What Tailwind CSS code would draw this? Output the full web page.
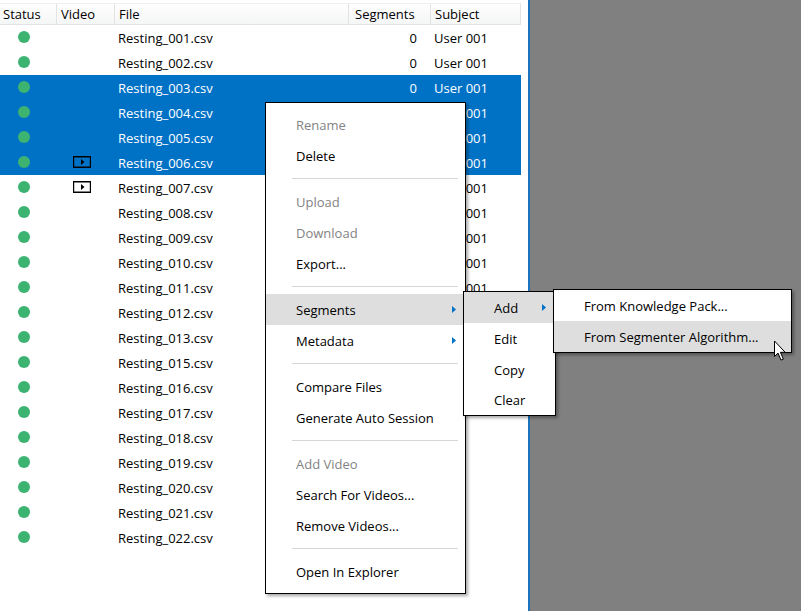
<!DOCTYPE html>
<html lang="en">
<head>
<meta charset="utf-8">
<title>Project files</title>
<script src="https://cdn.jsdelivr.net/npm/@tailwindcss/browser@4"></script>
</head>
<body class="relative flex min-h-screen overflow-hidden bg-[#808080] font-['Open_Sans','Noto_Sans',sans-serif] text-[13px] leading-5 text-black">
<main class="w-[530px] shrink-0 border-r-2 border-[#1a74bd] bg-white pt-[3px]">
  <table class="w-[521px] table-fixed border-separate border-spacing-0">
    <colgroup><col class="w-[57px]"><col class="w-[58px]"><col class="w-[234px]"><col class="w-[82px]"><col></colgroup>
    <thead>
      <tr class="h-[22px] bg-linear-to-b from-white to-[#f4f5f6] text-left">
        <th class="border-y border-r border-[#e2e3e5] border-t-[#f0f0f0] p-0 pl-[3px] font-normal">Status</th>
        <th class="border-y border-r border-[#e2e3e5] border-t-[#f0f0f0] p-0 pl-1 font-normal">Video</th>
        <th class="border-y border-r border-[#e2e3e5] border-t-[#f0f0f0] p-0 pl-1 font-normal">File</th>
        <th class="border-y border-r border-[#e2e3e5] border-t-[#f0f0f0] p-0 pl-[6px] font-normal">Segments</th>
        <th class="border-y border-r border-[#e2e3e5] border-t-[#f0f0f0] p-0 pl-1 font-normal">Subject</th>
      </tr>
    </thead>
    <tbody id="files"></tbody>
  </table>
</main>
<aside class="flex-1"></aside>

<template id="row">
  <tr class="h-[25px]">
    <td class="p-0 pb-0.5"><span class="ml-[18px] block size-3 rounded-full bg-[#3cb371]"></span></td>
    <td class="p-0 pb-0.5"></td>
    <td class="p-0 pl-[3px]"></td>
    <td class="p-0 pr-[14px] text-right"></td>
    <td class="p-0 pl-[3px]"></td>
  </tr>
</template>
<template id="clip">
  <svg class="ml-4 block h-3 w-[18px]" viewBox="0 0 18 12"><path d="M0 0h18v12H0zM1.2 1.4v9h15.6v-9z" fill="#000" fill-rule="evenodd"/><path d="M8 3l3.5 3L8 9z" fill="#000"/></svg>
</template>

<menu class="absolute left-[265px] top-[102px] w-[201px] border border-black bg-white py-[6px] shadow-[2px_2px_3px_rgba(0,0,0,0.35)]">
  <li><button disabled class="block h-[31px] w-full pl-[30px] text-left text-[#838383]">Rename</button></li>
  <li><button class="block h-[31px] w-full pl-[30px] text-left">Delete</button></li>
  <li class="my-[7px] ml-[26px] mr-[7px] h-px bg-[#d7d7d7]"></li>
  <li><button disabled class="block h-[31px] w-full pl-[30px] text-left text-[#838383]">Upload</button></li>
  <li><button disabled class="block h-[31px] w-full pl-[30px] text-left text-[#838383]">Download</button></li>
  <li><button class="block h-[31px] w-full pl-[30px] text-left">Export...</button></li>
  <li class="my-[7px] ml-[26px] mr-[7px] h-px bg-[#d7d7d7]"></li>
  <li><button class="flex h-[31px] w-full items-center justify-between bg-[#dedede] pl-[30px] pr-[9px] text-left">Segments<svg class="h-[7px] w-1" viewBox="0 0 4 7"><path d="M0 0l4 3.5L0 7z" fill="#0072c6"/></svg></button></li>
  <li><button class="flex h-[31px] w-full items-center justify-between pl-[30px] pr-[9px] text-left">Metadata<svg class="h-[7px] w-1" viewBox="0 0 4 7"><path d="M0 0l4 3.5L0 7z" fill="#0072c6"/></svg></button></li>
  <li class="my-[7px] ml-[26px] mr-[7px] h-px bg-[#d7d7d7]"></li>
  <li><button class="block h-[31px] w-full pl-[30px] text-left">Compare Files</button></li>
  <li><button class="block h-[31px] w-full pl-[30px] text-left">Generate Auto Session</button></li>
  <li class="my-[7px] ml-[26px] mr-[7px] h-px bg-[#d7d7d7]"></li>
  <li><button disabled class="block h-[31px] w-full pl-[30px] text-left text-[#838383]">Add Video</button></li>
  <li><button class="block h-[31px] w-full pl-[30px] text-left">Search For Videos...</button></li>
  <li><button class="block h-[31px] w-full pl-[30px] text-left">Remove Videos...</button></li>
  <li class="my-[7px] ml-[26px] mr-[7px] h-px bg-[#d7d7d7]"></li>
  <li><button class="block h-[31px] w-full pl-[30px] text-left">Open In Explorer</button></li>
</menu>

<menu class="absolute left-[463px] top-[291px] w-[93px] border border-black bg-white shadow-[2px_2px_3px_rgba(0,0,0,0.35)]">
  <li><button class="flex h-[31px] w-full items-center justify-between bg-[#dedede] pl-[30px] pr-[9px] text-left">Add<svg class="h-[7px] w-1" viewBox="0 0 4 7"><path d="M0 0l4 3.5L0 7z" fill="#0072c6"/></svg></button></li>
  <li><button class="block h-[31px] w-full pl-[30px] text-left">Edit</button></li>
  <li><button class="block h-[31px] w-full pl-[30px] text-left">Copy</button></li>
  <li><button class="block h-[30px] w-full pl-[30px] text-left">Clear</button></li>
</menu>

<menu class="absolute left-[553px] top-[289px] w-[239px] border border-black bg-white shadow-[2px_2px_3px_rgba(0,0,0,0.35)]">
  <li><button class="block h-[31px] w-full pl-[30px] text-left">From Knowledge Pack...</button></li>
  <li><button class="block h-[31px] w-full bg-[#dedede] pl-[30px] text-left">From Segmenter Algorithm...</button></li>
</menu>

<svg class="absolute left-[774px] top-[340px] h-[21px] w-3" viewBox="0 0 12 21"><path d="M.5 1v15.5l3.5-3.4 3 7 2.4-1-3-6.8h4.8z" fill="#fff" stroke="#000"/></svg>

<script>
  const body = document.getElementById('files');
  const selected = [3, 4, 5, 6], withVideo = [6, 7];
  const files = [1, 2, 3, 4, 5, 6, 7, 8, 9, 10, 11, 12, 13, 15, 16, 17, 18, 19, 20, 21, 22];
  for (const n of files) {
    const tr = document.getElementById('row').content.cloneNode(true).firstElementChild;
    tr.cells[2].textContent = 'Resting_' + String(n).padStart(3, '0') + '.csv';
    if (n <= 11) {
      tr.cells[3].textContent = '0';
      tr.cells[4].textContent = 'User 001';
    }
    if (selected.includes(n)) tr.classList.add('bg-[#0072c6]', 'text-white');
    if (withVideo.includes(n)) tr.cells[1].append(document.getElementById('clip').content.cloneNode(true));
    body.append(tr);
  }
</script>
</body>
</html>
